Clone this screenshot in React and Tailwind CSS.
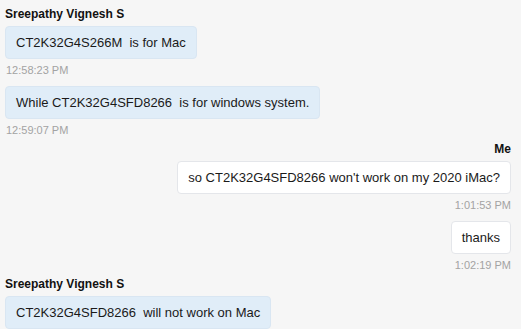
export default function App() {
  const font = { fontFamily: '"Liberation Sans", Arial, sans-serif' };
  const Name = ({ children, right }) => (
    <div className={`text-[12px] leading-[16px] font-bold text-[#111] ${right ? "text-right" : ""}`}>{children}</div>
  );
  const Time = ({ children, right }) => (
    <div className={`text-[11px] leading-[14px] text-[#a3a3a3] mt-[4px] ${right ? "text-right" : "pl-px"}`}>{children}</div>
  );
  const In = ({ children }) => (
    <div className="self-start mt-[4px] rounded-[4px] border border-[#d9e6f2] bg-[#e0edf8] px-[10px] py-[7px] text-[13px] leading-[17px] text-[#1a1a1a] whitespace-pre">{children}</div>
  );
  const Out = ({ children }) => (
    <div className="self-end mt-[4px] rounded-[4px] border border-[#e4e6ea] bg-white px-[10px] py-[7px] text-[13px] leading-[17px] text-[#1a1a1a] whitespace-pre">{children}</div>
  );
  return (
    <div className="w-[521px] h-[329px] overflow-hidden bg-[#f6f6f6] pl-[5px] pr-[10px] pt-[6px] flex flex-col" style={font}>
      <Name>Sreepathy Vignesh S</Name>
      <In>CT2K32G4S266M  is for Mac</In>
      <Time>12:58:23 PM</Time>
      <div className="mt-[5px] flex flex-col">
        <In>While CT2K32G4SFD8266  is for windows system.</In>
      </div>
      <Time>12:59:07 PM</Time>
      <div className="mt-[4px] flex flex-col">
        <Name right>Me</Name>
        <Out>so CT2K32G4SFD8266 won't work on my 2020 iMac?</Out>
        <Time right>1:01:53 PM</Time>
        <div className="mt-[5px] flex flex-col">
          <Out>thanks</Out>
        </div>
        <Time right>1:02:19 PM</Time>
      </div>
      <div className="mt-[4px] flex flex-col">
        <Name>Sreepathy Vignesh S</Name>
        <In>CT2K32G4SFD8266  will not work on Mac</In>
      </div>
    </div>
  );
}
